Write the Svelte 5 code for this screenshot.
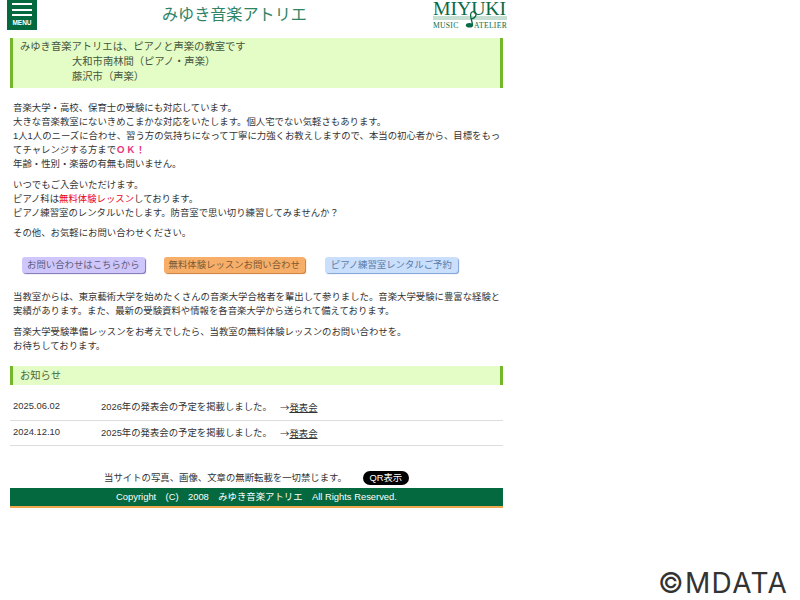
<script>
  const news = [
    { date: '2025.06.02', text: '2026年の発表会の予定を掲載しました。' },
    { date: '2024.12.10', text: '2025年の発表会の予定を掲載しました。' }
  ];
</script>

<div class="page">
  <header class="head">
    <div class="menu">
      <span class="bar"></span><span class="bar"></span><span class="bar"></span>
      <span class="menu-label">MENU</span>
    </div>
    <h1 class="title">みゆき音楽アトリエ</h1>
    <div class="logo">
      <div class="logo-main">MIYUKI</div>
      <div class="logo-sub"><span>MUSIC</span><span>ATELIER</span></div>
      <svg class="note" viewBox="0 0 16 18" width="16" height="18" aria-hidden="true">
        <path d="M9.5 15 C9 10 6.5 6 8 3 C9.5 0.5 13.5 1.5 13 5 C12.5 7.5 10.5 8.5 8 9" fill="none" stroke="#0a6a46" stroke-width="1.3"/>
        <ellipse cx="6.5" cy="15.3" rx="3.6" ry="2.3" fill="#0a6a46"/>
      </svg>
    </div>
  </header>

  <section class="lead">
    <p>みゆき音楽アトリエは、ピアノと声楽の教室です</p>
    <p class="indent">大和市南林間（ピアノ・声楽）</p>
    <p class="indent">藤沢市（声楽）</p>
  </section>

  <section class="copy first">
    <p>音楽大学・高校、保育士の受験にも対応しています。<br>
    大きな音楽教室にないきめこまかな対応をいたします。個人宅でない気軽さもあります。<br>
    1人1人のニーズに合わせ、習う方の気持ちになって丁寧に力強くお教えしますので、本当の初心者から、目標をもってチャレンジする方まで<b class="ok">ＯＫ！</b><br>
    年齢・性別・楽器の有無も問いません。</p>
    <p class="tight">いつでもご入会いただけます。<br>
    ピアノ科は<span class="red">無料体験レッスン</span>しております。<br>
    ピアノ練習室のレンタルいたします。防音室で思い切り練習してみませんか？</p>
    <p>その他、お気軽にお問い合わせください。</p>
  </section>

  <div class="buttons">
    <span class="btn purple">お問い合わせはこちらから</span>
    <span class="btn orange">無料体験レッスンお問い合わせ</span>
    <span class="btn blue">ピアノ練習室レンタルご予約</span>
  </div>

  <section class="copy">
    <p>当教室からは、東京藝術大学を始めたくさんの音楽大学合格者を輩出して参りました。音楽大学受験に豊富な経験と実績があります。また、最新の受験資料や情報を各音楽大学から送られて備えております。</p>
    <p>音楽大学受験準備レッスンをお考えでしたら、当教室の無料体験レッスンのお問い合わせを。<br>
    お待ちしております。</p>
  </section>

  <h2 class="news-head">お知らせ</h2>

  <ul class="news">
    {#each news as item}
      <li class="row">
        <span class="date">{item.date}</span>
        <span class="msg">{item.text}</span>
        <span class="link"><span class="arrow">→</span><u>発表会</u></span>
      </li>
    {/each}
  </ul>

  <div class="notice">
    <span>当サイトの写真、画像、文章の無断転載を一切禁じます。</span>
    <span class="qr">QR表示</span>
  </div>

  <footer class="foot">Copyright　(C)　2008　みゆき音楽アトリエ　All Rights Reserved.</footer>
</div>

<div class="mark">©MDATA</div>

<style>
  :global(body) {
    margin: 0;
    background: #fff;
  }
  .page {
    width: 493px;
    margin-left: 10px;
    font-family: "Liberation Sans", "Noto Sans CJK JP", sans-serif;
    font-size: 9.4px;
    line-height: 14px;
    color: #333;
  }
  .head {
    display: flex;
    align-items: flex-start;
    height: 38px;
  }
  .menu {
    flex: none;
    width: 30px;
    height: 30px;
    margin-left: -3px;
    box-sizing: border-box;
    padding: 3px 0 0;
    background: #04693f;
    display: flex;
    flex-direction: column;
    gap: 3.5px;
  }
  .bar {
    display: block;
    height: 2px;
    margin: 0 5px;
    background: #fff;
  }
  .menu-label {
    color: #fff;
    font-size: 6.5px;
    font-weight: 700;
    line-height: 6px;
    text-align: center;
  }
  .title {
    margin: 4px 0 0 125px;
    font-size: 16.1px;
    line-height: 20px;
    font-weight: 400;
    color: #2f8466;
  }
  .logo {
    position: relative;
    margin-left: auto;
    margin-right: -4px;
    width: 74px;
    height: 30px;
    color: #0a6a46;
    font-family: "Liberation Serif", serif;
  }
  .logo-main {
    font-size: 19.8px;
    line-height: 15px;
    padding-top: 1px;
    white-space: nowrap;
    border-bottom: 4px solid #c6dfd3;
    letter-spacing: -0.1px;
  }
  .logo-sub {
    display: flex;
    justify-content: space-between;
    font-size: 7.6px;
    line-height: 9px;
    margin-top: 1px;
    letter-spacing: 0.3px;
  }
  .note {
    position: absolute;
    left: 30px;
    top: 10px;
  }
  .lead {
    height: 50px;
    box-sizing: border-box;
    padding: 1px 10px 0 7px;
    background: #e4fcc5;
    border-left: 3px solid #74b72a;
    border-right: 3px solid #74b72a;
    font-size: 10.3px;
    line-height: 15px;
    color: #44553f;
  }
  .lead p {
    margin: 0;
  }
  .lead .indent {
    padding-left: 52px;
  }
  .copy {
    padding: 0 0 0 3px;
  }
  .first {
    margin-top: 13px;
  }
  .copy p {
    margin: 0 0 7px;
  }
  .copy .tight {
    margin-bottom: 6px;
  }
  .ok {
    color: #e8387d;
    letter-spacing: 0.5px;
  }
  .red {
    color: #e8001c;
  }
  .buttons {
    display: flex;
    gap: 19px;
    margin: 17px 0 17px 12px;
  }
  .btn {
    box-sizing: border-box;
    height: 16px;
    line-height: 15px;
    padding: 0 5px;
    border-radius: 3px;
    white-space: nowrap;
    color: #5d5d7a;
  }
  .purple {
    background: #cfc6fb;
    box-shadow: 1px 1px 1px #7a70b5;
  }
  .orange {
    background: #f7ae68;
    box-shadow: 1px 1px 1px #c97a32;
    color: #7b5a35;
  }
  .blue {
    margin-left: 1px;
    padding: 0 6px;
    background: #c9dffc;
    box-shadow: 1px 1px 1px #7c9fd6;
    color: #5b7aa6;
  }
  .news-head {
    margin: 13px 0 0;
    height: 19px;
    box-sizing: border-box;
    padding-left: 7px;
    background: #e4fcc5;
    border-left: 3px solid #74b72a;
    border-right: 3px solid #74b72a;
    font-size: 10.3px;
    line-height: 19px;
    font-weight: 400;
    color: #4a6a3c;
  }
  .news {
    list-style: none;
    margin: 10px 0 0;
    padding: 0;
  }
  .row {
    display: flex;
    align-items: flex-start;
    height: 25.5px;
    box-sizing: border-box;
    padding: 5px 3px 0;
    border-bottom: 1px solid #ddd;
  }
  .date {
    width: 88px;
    margin-top: -1px;
  }
  .msg {
    width: 179px;
  }
  .arrow {
    font-family: "Noto Sans CJK JP", sans-serif;
  }
  .link u {
    text-decoration: underline;
  }
  .notice {
    display: flex;
    align-items: center;
    margin-top: 25px;
    padding-left: 94px;
    gap: 16px;
  }
  .qr {
    width: 46px;
    height: 14px;
    line-height: 14px;
    border-radius: 7px;
    background: #000;
    color: #fff;
    text-align: center;
  }
  .foot {
    margin-top: 3px;
    height: 20px;
    box-sizing: border-box;
    background: #04693f;
    border-bottom: 2px solid #f2a94e;
    color: #fff;
    text-align: center;
    line-height: 17px;
  }
  .mark {
    position: absolute;
    right: 12px;
    bottom: 2px;
    font-family: Inter, "Liberation Sans", sans-serif;
    font-size: 28px;
    letter-spacing: 1.3px;
    line-height: 30px;
    color: #333;
  }
</style>
